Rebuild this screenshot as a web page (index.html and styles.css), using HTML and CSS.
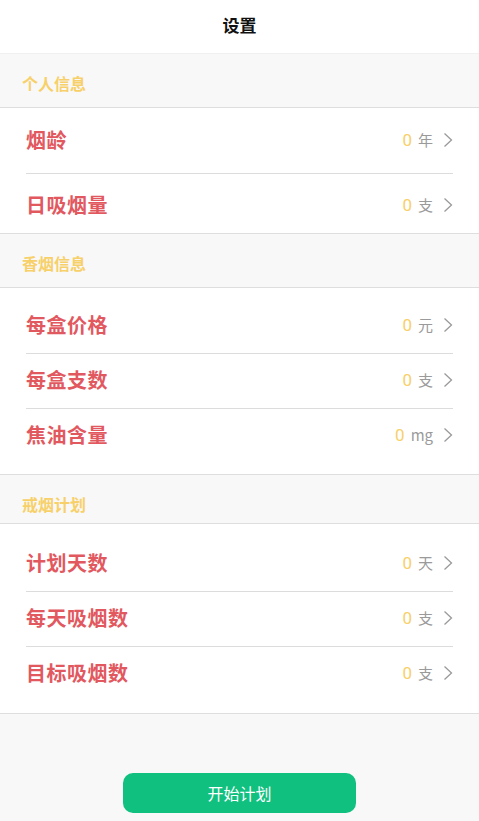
FILE: index.html
```html
<!DOCTYPE html>
<html lang="zh-CN">
<head>
<meta charset="utf-8">
<title>设置</title>
<link rel="stylesheet" href="styles.css">
</head>
<body>
<div class="page">
  <header class="topbar">设置</header>

  <div class="sec-head">个人信息</div>
  <div class="list list-first">
    <div class="row row-a"><span class="label">烟龄</span><span class="val"><span class="num">0</span><span class="unit">年</span><svg class="chev" viewBox="0 0 10 16"><path d="M1.5 1.5 L8.5 8 L1.5 14.5"/></svg></span></div>
    <div class="row row-b"><span class="label">日吸烟量</span><span class="val"><span class="num">0</span><span class="unit">支</span><svg class="chev" viewBox="0 0 10 16"><path d="M1.5 1.5 L8.5 8 L1.5 14.5"/></svg></span></div>
  </div>

  <div class="sec-head">香烟信息</div>
  <div class="list list-mid">
    <div class="row"><span class="label">每盒价格</span><span class="val"><span class="num">0</span><span class="unit">元</span><svg class="chev" viewBox="0 0 10 16"><path d="M1.5 1.5 L8.5 8 L1.5 14.5"/></svg></span></div>
    <div class="row"><span class="label">每盒支数</span><span class="val"><span class="num">0</span><span class="unit">支</span><svg class="chev" viewBox="0 0 10 16"><path d="M1.5 1.5 L8.5 8 L1.5 14.5"/></svg></span></div>
    <div class="row"><span class="label">焦油含量</span><span class="val"><span class="num">0</span><span class="unit">mg</span><svg class="chev" viewBox="0 0 10 16"><path d="M1.5 1.5 L8.5 8 L1.5 14.5"/></svg></span></div>
  </div>

  <div class="sec-head sec-short">戒烟计划</div>
  <div class="list list-last">
    <div class="row"><span class="label">计划天数</span><span class="val"><span class="num">0</span><span class="unit">天</span><svg class="chev" viewBox="0 0 10 16"><path d="M1.5 1.5 L8.5 8 L1.5 14.5"/></svg></span></div>
    <div class="row"><span class="label">每天吸烟数</span><span class="val"><span class="num">0</span><span class="unit">支</span><svg class="chev" viewBox="0 0 10 16"><path d="M1.5 1.5 L8.5 8 L1.5 14.5"/></svg></span></div>
    <div class="row"><span class="label">目标吸烟数</span><span class="val"><span class="num">0</span><span class="unit">支</span><svg class="chev" viewBox="0 0 10 16"><path d="M1.5 1.5 L8.5 8 L1.5 14.5"/></svg></span></div>
  </div>

  <div class="actions">
    <button class="start">开始计划</button>
  </div>
</div>
</body>
</html>
```

FILE: styles.css
```css
* { box-sizing: border-box; }
html, body { margin: 0; padding: 0; }
body {
  background: #f8f8f8;
  font-family: "Noto Sans CJK SC", "Noto Sans", sans-serif;
}
.page { width: 479px; min-height: 821px; background: #f8f8f8; }
.topbar {
  height: 54px;
  background: #fff;
  border-bottom: 1px solid #f0f0f0;
  display: flex;
  align-items: center;
  justify-content: center;
  font-size: 17px;
  font-weight: 700;
  color: #111;
  padding-bottom: 4px;
}
.sec-head {
  height: 54px;
  padding: 19px 0 0 22px;
  font-size: 16px;
  line-height: 20px;
  font-weight: 700;
  color: #f7d06a;
  border-bottom: 1px solid #dedede;
  background: #f8f8f8;
}
.sec-short { height: 49px; }
.list {
  background: #fff;
  border-bottom: 1px solid #dedede;
}
.list-first { padding: 0; }
.list-mid { padding: 11px 0 11px; }
.list-last { padding: 13px 0 12px; }
.row {
  margin: 0 26px;
  height: 55px;
  display: flex;
  align-items: center;
  justify-content: space-between;
  border-bottom: 1px solid #dcdcdc;
  padding-bottom: 3px;
}
.row:last-child { border-bottom: none; height: 54px; }
.list-first .row-a { height: 66px; padding-bottom: 2px; }
.list-first .row-b { height: 59px; padding-top: 2px; padding-bottom: 0; }
.label {
  font-size: 20px;
  font-weight: 700;
  color: #e2585f;
  letter-spacing: 0.5px;
}
.val { display: flex; align-items: center; }
.num {
  font-family: "Roboto", "Noto Sans", sans-serif;
  font-size: 17px;
  color: #f7d06a;
  margin-right: 6px;
}
.unit {
  font-size: 15px;
  color: #9a9a9a;
}
.chev {
  width: 10px;
  height: 16px;
  margin-left: 10px;
  fill: none;
  stroke: #9a9a9a;
  stroke-width: 1.3;
}
.actions {
  display: flex;
  justify-content: center;
  padding-top: 59px;
}
.start {
  width: 233px;
  height: 40px;
  border: none;
  border-radius: 10px;
  background: #10c07f;
  color: #fff;
  font-family: "Noto Sans CJK SC", "Noto Sans", sans-serif;
  font-size: 16px;
  padding: 0;
}
```
